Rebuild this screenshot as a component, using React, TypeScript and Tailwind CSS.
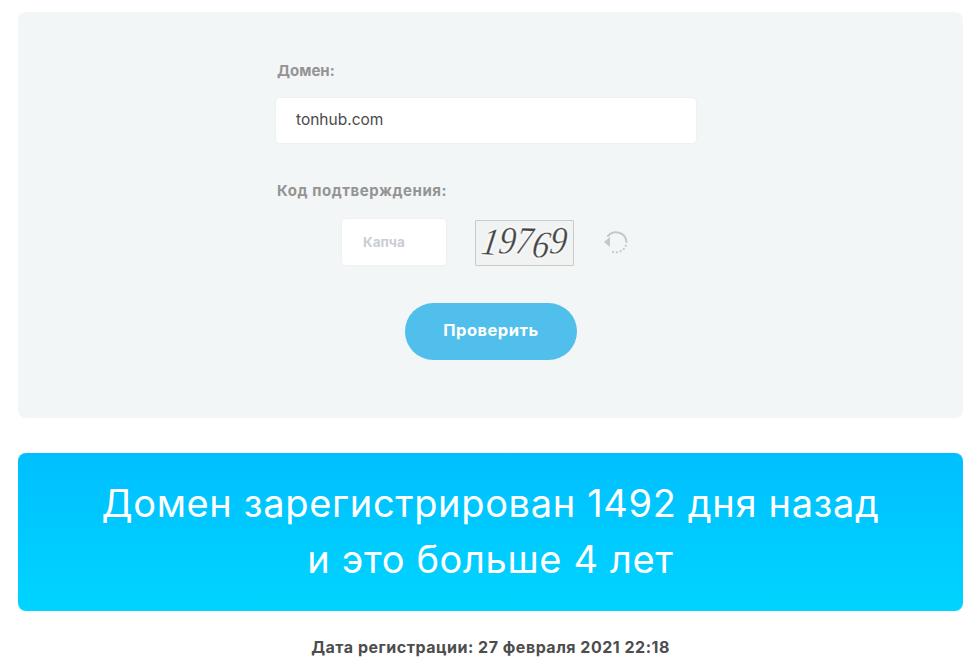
const digits = [
  { n: '1', cls: 'rotate-[4deg] -translate-y-px' },
  { n: '9', cls: 'rotate-[2deg] -translate-y-0.5' },
  { n: '7', cls: 'rotate-[2deg] -translate-y-0.5' },
  { n: '6', cls: 'rotate-[6deg] translate-y-0.5' },
  { n: '9', cls: 'rotate-[2deg] -translate-y-0.5' },
];

export default function App() {
  return (
    <div className="h-[669px] overflow-hidden bg-white pr-[15px] pl-[18px] pt-3 font-['Inter','Liberation_Sans',sans-serif]">
      {/* Form card */}
      <section className="h-[406px] rounded-lg bg-[#f3f6f7] pl-[258px] pt-[49px]">
        <label className="block pl-px text-[15px] leading-[20px] font-bold text-[#949494]">Домен:</label>
        <div className="mt-[17px] flex h-[45px] w-[420px] items-center rounded-sm bg-white pb-0.5 pl-5 text-[15.5px] text-[#4a4a4a] shadow-[0_0_2px_rgba(0,0,0,0.08)]">
          tonhub.com
        </div>

        <label className="mt-[38px] block pl-px text-[15px] leading-[20px] font-bold tracking-[0.55px] text-[#949494]">
          Код подтверждения:
        </label>

        <div className="mt-[18px] ml-[66px] flex items-start">
          <div className="flex h-[46px] w-[104px] items-center rounded-sm bg-white pl-[21px] text-[13.5px] font-bold text-[#c9ced6] shadow-[0_0_2px_rgba(0,0,0,0.08)]">
            Капча
          </div>
          <div className="mt-px ml-[29px] flex h-[46px] w-[99px] items-center justify-center rounded-[1px] border border-[#c8cbcc] bg-[#f1f3f3] font-['Liberation_Serif',serif] text-[34px] leading-[40px] text-[#444] italic [-webkit-text-stroke:0.3px_#fff] [text-shadow:0_0_3px_#fff,0_0_3px_#fff]">
            {digits.map((d, i) => (
              <span key={i} className={`inline-block scale-y-[1.15] skew-x-[-6deg] ${d.cls}`}>
                {d.n}
              </span>
            ))}
          </div>
          <svg className="mt-[9px] ml-[28px]" width="28" height="28" viewBox="0 0 28 28" fill="none">
            <path d="M6 8A10.5 10.5 0 0 1 24.5 14" stroke="#c4c8c9" strokeWidth="2" strokeLinecap="round" />
            <path d="M23.8 17.5A10.5 10.5 0 0 1 9 23" stroke="#c4c8c9" strokeWidth="2" strokeLinecap="round" strokeDasharray="0.4 3.4" />
            <path d="M2 14L8 9V19Z" fill="#c4c8c9" />
          </svg>
        </div>

        <button className="mt-[37px] ml-[129px] flex h-[57px] w-[172px] items-center justify-center rounded-full bg-[#51bfec] pb-0.5 text-[16.5px] font-bold tracking-[0.5px] text-white">
          Проверить
        </button>
      </section>

      {/* Result banner */}
      <section className="mt-[35px] flex h-[158px] flex-col items-center justify-center rounded-lg bg-gradient-to-b from-[#00bfff] to-[#00d4ff] pb-0.5 text-[38px] leading-[56px] tracking-[0.65px] text-white">
        <p>Домен зарегистрирован 1492 дня назад</p>
        <p>и это больше 4 лет</p>
      </section>

      <p className="mt-[26px] text-center text-[16px] leading-[20px] font-bold tracking-[0.5px] text-[#4d4d4d]">
        Дата регистрации: 27 февраля 2021 22:18
      </p>
    </div>
  );
}
